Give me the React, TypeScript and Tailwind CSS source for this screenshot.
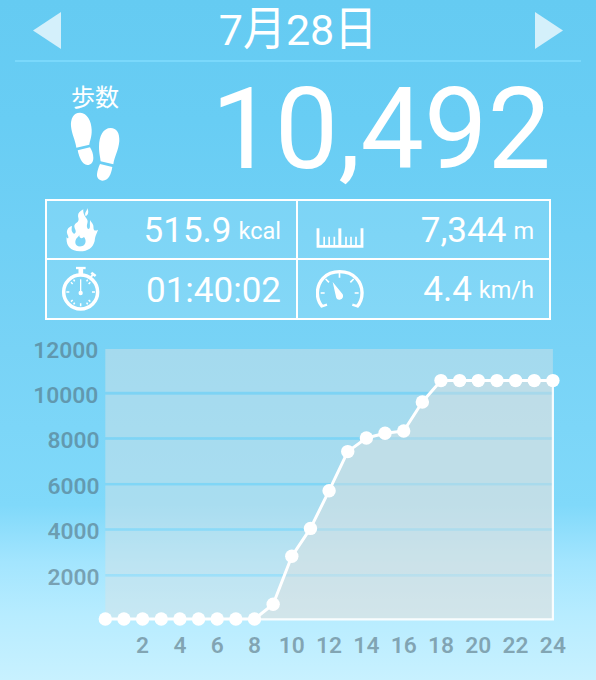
import React from 'react';

interface MetricProps {
  icon: React.ReactNode;
  value: string;
  unit?: string;
}

const yTicks = [
  { label: '12000', x: 98.3, y: 357.5 },
  { label: '10000', x: 98.3, y: 402.5 },
  { label: '8000', x: 99.5, y: 447.7 },
  { label: '6000', x: 99.5, y: 493.5 },
  { label: '4000', x: 99.5, y: 539 },
  { label: '2000', x: 99.5, y: 584.7 },
];

const xTicks = [2, 4, 6, 8, 10, 12, 14, 16, 18, 20, 22, 24];

// bands between the grid lines
const bands = [
  [349, 391.8],
  [394.6, 437.2],
  [439.8, 483],
  [485.4, 528.2],
  [530.8, 574],
  [576.6, 619],
];

// one marker per hour
const levels = [
  619, 619, 619, 619, 619, 619, 619, 619, 619, 604.3, 556.3, 528.4, 490.7,
  451.6, 438, 433.3, 431, 402, 380.6, 380.6, 380.6, 380.6, 380.6, 380.6, 380.6,
];

const hourX = (hour: number) => 105.3 + hour * 18.65;

const Footprints = () => (
  <svg viewBox="60 110 150 208" className="w-[50px] h-[69.3px]" fill="white">
    <path d="M91 112C71 111 61 130 63 153C65 176 76 195 79 217L118 208C119 197 126 184 125 163C124 136 111 113 91 112Z" />
    <path d="M83 225L120 216C125 224 130 236 130 248C130 262 122 269 112 269C96 269 87 244 83 225Z" />
    <path d="M182 158C160 158 147 182 147 214C147 234 151 246 152 258L190 267C193 245 206 224 208 197C209 173 200 158 182 158Z" />
    <path d="M150 266L187 275C184 296 175 316 158 316C147 316 140 308 141 297C142 286 146 275 150 266Z" />
  </svg>
);

const Flame = () => (
  <svg viewBox="78 38 98 134" className="ml-[2px] w-[32.7px] h-[44.7px]" fill="white">
    <path
      fillRule="evenodd"
      d="M130 45C116 52 112 60 115 70C118 80 112 85 106 88C100 94 104 101 107 109C108 116 103 121 99 116C93 109 95 102 96 95C87 97 79 106 81 116C83 123 86 127 85 131C83 133 81 131 80 127C77 152 89 171 120 171C144 171 159 160 164 140C165 124 171 117 174 106C169 109 165 110 162 107C159 102 162 95 158 89C155 84 152 81 151 77C148 87 151 95 149 101C146 106 142 104 141 98C139 90 146 84 141 75C136 67 128 59 130 45ZM118 122C117 132 127 134 132 128C140 137 138 154 124 156C109 158 102 147 108 135C111 128 115 129 118 122Z"
    />
    <path d="M141 41C143 50 131 54 137 66C146 61 147 50 141 41Z" />
  </svg>
);

const Stopwatch = () => (
  <svg viewBox="64 215 118 135" className="-ml-[3px] w-[39.3px] h-[45px]" fill="none" stroke="white">
    <circle cx="123" cy="293" r="51" strokeWidth="10.500" />
    <path d="M109 221H138" strokeWidth="7" />
    <path d="M123.500 223V242" strokeWidth="14" />
    <path d="M152 249L162 239" strokeWidth="6" />
    <path d="M155 235L168 245" strokeWidth="8" />
    <path d="M123 255V292" strokeWidth="4" />
    <path
      d="M80 293H89M157 293H166M123 327V336M94 264L99 269M152 264L147 269M94 322L99 317M152 322L147 317M102 256L105 261M144 256L141 261M102 330L105 325M144 330L141 325"
      strokeWidth="4.500"
    />
    <circle cx="123" cy="296" r="6.500" fill="white" stroke="none" />
  </svg>
);

const Ruler = () => (
  <svg viewBox="62 100 144 62" className="ml-[1px] mt-[19px] w-12 h-[20.7px]" fill="none" stroke="white">
    <path d="M68 101V155H200V101" strokeWidth="8.500" />
    <path d="M133.500 101V155" strokeWidth="9" />
    <path d="M86.500 126V155M101.500 126V155M117 126V155M152 126V155M167 126V155M182 126V155" strokeWidth="5" />
  </svg>
);

const Gauge = () => (
  <svg viewBox="62 222 144 120" className="ml-[1px] w-12 h-10" fill="none" stroke="white">
    <path d="M81 335C60 311 62 273 83 250C96 236 114 230 133 230C152 230 170 236 183 250C205 273 206 311 185 335" strokeWidth="10" />
    <path d="M77 335L95 329M189 335L171 329" strokeWidth="7" />
    <path d="M76 294H88M178 294H190M132.500 234V248M91 252L101 262M175 252L165 262" strokeWidth="5" />
    <path d="M112 261L142 298C145 305 142 313 134 314C127 315 123 311 122 305Z" fill="white" stroke="none" />
  </svg>
);

const Metric: React.FC<MetricProps> = ({ icon, value, unit }) => (
  <div className="flex items-center justify-between pl-[17px] pr-[15px]">
    {icon}
    <div className="flex items-baseline gap-[7px] pt-[3px]">
      <span className="text-[35px] leading-none">{value}</span>
      {unit && <span className="text-[23.5px] leading-none pb-[3px] -translate-y-[3px]">{unit}</span>}
    </div>
  </div>
);

const StepChart = () => {
  const points = levels.map((y, hour) => `${hourX(hour)},${y}`).join(' ');

  return (
    <svg viewBox="0 320 596 360" className="block w-[596px] h-[360px]">
      {bands.map(([top, bottom]) => (
        <rect key={top} x="105.300" y={top} width="447.600" height={bottom - top} fill="#d9e2e4" fillOpacity="0.46" />
      ))}
      {bands.slice(1).map(([top]) => (
        <rect key={top} x="105.300" y={top - 2.6} width="447.600" height="2.600" fill="#84d0ee" fillOpacity="0.3" />
      ))}
      <polygon points={`${points} ${hourX(24)},619`} fill="#e1dfdd" fillOpacity="0.42" />
      <path d={`M${hourX(8)} 619.300H${hourX(24)}V380`} fill="none" stroke="white" strokeOpacity="0.9" strokeWidth="2.200" />
      <polyline points={points} fill="none" stroke="white" strokeWidth="3" strokeLinejoin="round" />
      {levels.map((y, hour) => (
        <circle key={hour} cx={hourX(hour)} cy={y} r="6.700" fill="white" />
      ))}
      <g fill="#4c6470" fillOpacity="0.53" fontSize="22.800" fontWeight="600">
        {yTicks.map(({ label, x, y }) => (
          <text key={label} x={x} y={y} textAnchor="end">
            {label}
          </text>
        ))}
        {xTicks.map((hour) => (
          <text key={hour} x={hourX(hour)} y="652.700" textAnchor="middle">
            {hour}
          </text>
        ))}
      </g>
    </svg>
  );
};

export default function App() {
  return (
    <div className="w-[596px] h-[680px] overflow-hidden flex flex-col text-white font-['Roboto','Noto_Sans_CJK_JP',sans-serif] bg-[linear-gradient(to_bottom,#65cbf2_0px,#68cdf4_120px,#78d3f6_350px,#80d9fa_505px,#a3e5fe_562px,#b7ecff_615px,#c8f1ff_680px)]">
      {/* Date header */}
      <header className="mx-[15px] h-[62px] shrink-0 flex items-center justify-between px-[18px] border-b-2 border-[#7ad8fb]">
        <button aria-label="前の日">
          <svg viewBox="0 0 28 37" className="w-7 h-[37px]">
            <path d="M0 18.500L28 0V37Z" fill="#d4f0fb" />
          </svg>
        </button>
        <h1 className="text-[43px] leading-none font-normal">
          7<span className="inline-block scale-y-[1.08] -translate-y-px">月</span>28
          <span className="inline-block scale-y-[1.08] -translate-y-px">日</span>
        </h1>
        <button aria-label="次の日">
          <svg viewBox="0 0 28 37" className="w-7 h-[37px]">
            <path d="M28 18.500L0 0V37Z" fill="#d4f0fb" />
          </svg>
        </button>
      </header>

      {/* Step count */}
      <section className="h-[137px] shrink-0 flex justify-between pl-[70px] pr-[45px]">
        <div className="flex flex-col items-center pt-[22px]">
          <span className="text-[24px] leading-[28px]">歩数</span>
          <Footprints />
        </div>
        <span className="text-[113px] leading-[136px]">10,492</span>
      </section>

      {/* Metrics */}
      <section className="mx-[45px] h-[121px] shrink-0 grid grid-cols-2 grid-rows-2 border-2 border-white bg-white/10">
        <div className="grid border-r-2 border-b-2 border-white">
          <Metric icon={<Flame />} value="515.9" unit="kcal" />
        </div>
        <div className="grid border-b-2 border-white">
          <Metric icon={<Ruler />} value="7,344" unit="m" />
        </div>
        <div className="grid border-r-2 border-white">
          <Metric icon={<Stopwatch />} value="01:40:02" />
        </div>
        <div className="grid">
          <Metric icon={<Gauge />} value="4.4" unit="km/h" />
        </div>
      </section>

      <StepChart />
    </div>
  );
}
